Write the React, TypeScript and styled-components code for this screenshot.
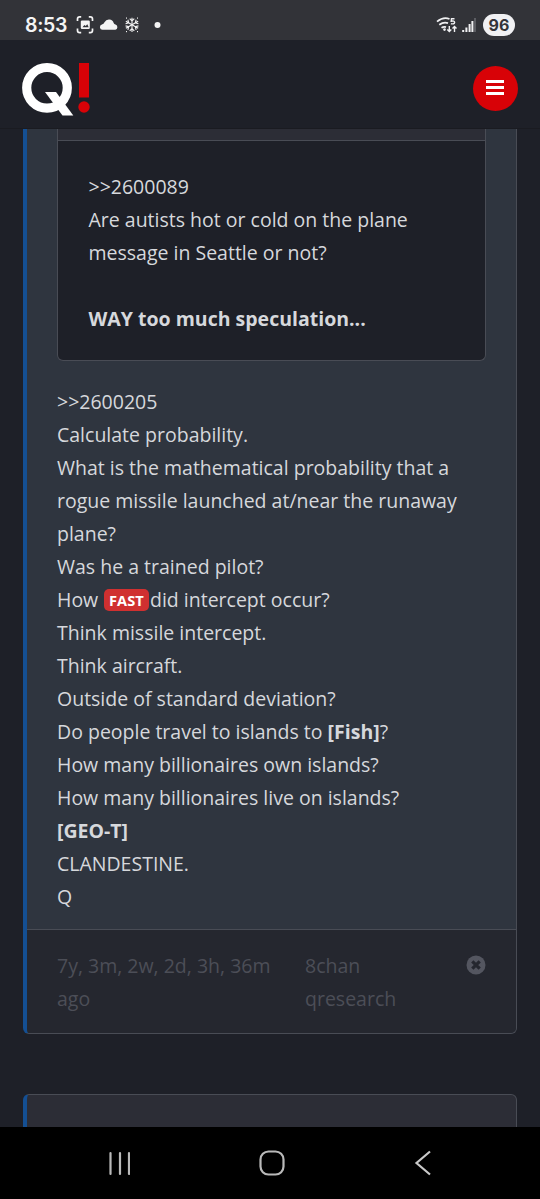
import React from "react";
import styled, { createGlobalStyle } from "styled-components";

const Global = createGlobalStyle`
  * { box-sizing: border-box; }
  body { margin: 0; background: #1e2028; }
`;

const Screen = styled.div`
  width: 540px;
  height: 1199px;
  display: flex;
  flex-direction: column;
  overflow: hidden;
  background: #1e2028;
  color: #d6d8dc;
  font-family: "Open Sans", "Noto Sans", sans-serif;
  font-size: 19.5px;
  line-height: 33px;
`;

const StatusBar = styled.div`
  flex: none;
  height: 40px;
  display: flex;
  justify-content: space-between;
  padding: 0 25px;
  background: #323338;
  color: #f4f4f4;
`;

const StatusGroup = styled.div`
  display: flex;
  align-items: center;
  padding-top: 10px;
`;

const Clock = styled.span`
  width: 51px;
  font: 600 19.5px/30px Inter, Roboto, sans-serif;
  letter-spacing: -0.35px;
  white-space: nowrap;
`;

const Battery = styled.span`
  width: 32px;
  height: 22px;
  margin-left: 6px;
  border-radius: 11px;
  background: #f1f1f3;
  color: #333439;
  text-align: center;
  font: 700 16px/22px Inter, Roboto, sans-serif;
`;

const Header = styled.header`
  flex: none;
  height: 89px;
  display: flex;
  align-items: flex-start;
  justify-content: space-between;
  padding: 22px 22.5px 0 22px;
  border-bottom: 1px solid #1a1b21;
`;

const MenuButton = styled.button`
  width: 45px;
  height: 45px;
  margin-top: 3.5px;
  padding: 0 1px 1px 0;
  border: 0;
  border-radius: 50%;
  background: #d80207;
  display: flex;
  flex-direction: column;
  align-items: center;
  justify-content: center;
  gap: 3px;
`;

const MenuLine = styled.span`
  width: 18px;
  height: 3px;
  background: #fff;
`;

const Content = styled.main`
  flex: 1;
  min-height: 0;
  overflow: hidden;
  padding: 0 23px;
`;

const Card = styled.article<{ $next?: boolean }>`
  border: 1px solid #494c55;
  border-left: 4px solid #144f93;
  border-radius: ${(p) => (p.$next ? "6px 6px 0 0" : "0 0 6px 6px")};
  border-top-width: ${(p) => (p.$next ? "1px" : "0")};
  margin-top: ${(p) => (p.$next ? "60px" : "0")};
  height: ${(p) => (p.$next ? "60px" : "905px")};
  background: ${(p) => (p.$next ? "#2c2d36" : "#2f353f")};
  overflow: hidden;
`;

const CardBody = styled.div`
  height: 800px;
  padding: 0 30px;
`;

const Quote = styled.section`
  height: 232px;
  border: 1px solid #494c55;
  border-top: 0;
  border-radius: 0 0 6px 6px;
  background: #1e2028;
  overflow: hidden;
`;

const QuoteHeader = styled.div`
  height: 12px;
  background: #2c2d36;
  border-bottom: 1px solid #494c55;
`;

const QuoteText = styled.div`
  padding: 29px 30px 0 30.5px;
`;

const Line = styled.div`
  height: 33px;
  white-space: nowrap;
`;

const Message = styled.div`
  padding-top: 24px;
`;

const Tag = styled.span`
  display: inline-block;
  height: 22px;
  margin: -5px 1px 0 0.5px;
  padding: 0 5.3px;
  border-radius: 5px;
  background: #d03030;
  color: #fff;
  font-size: 14.6px;
  font-weight: 700;
  line-height: 22px;
  vertical-align: 1px;
`;

const CardFooter = styled.footer`
  height: 104px;
  display: flex;
  padding: 19px 30px 0;
  border-top: 1px solid #494c55;
  background: #25272f;
  color: #4c4e57;
`;

const Age = styled.div`
  width: 248px;
`;

const Source = styled.div`
  flex: 1;
`;

const CloseIcon = styled.svg`
  flex: none;
  margin-top: 5.5px;
`;

const NavBar = styled.nav`
  flex: none;
  height: 72px;
  display: flex;
  align-items: center;
  justify-content: space-between;
  padding: 0 108px 0 106px;
  background: #000;
`;

const message: React.ReactNode[] = [
  ">>2600205",
  "Calculate probability.",
  "What is the mathematical probability that a",
  "rogue missile launched at/near the runaway",
  "plane?",
  "Was he a trained pilot?",
  <>How <Tag>FAST</Tag>did intercept occur?</>,
  "Think missile intercept.",
  "Think aircraft.",
  "Outside of standard deviation?",
  <>Do people travel to islands to <b>[Fish]</b>?</>,
  "How many billionaires own islands?",
  "How many billionaires live on islands?",
  <b>[GEO-T]</b>,
  "CLANDESTINE.",
  "Q",
];

const StatusIcons = () => (
  <svg width="90" height="24" viewBox="76 13 90 24" fill="none" stroke="#f4f4f4" strokeWidth="1.7">
    <path d="M77.500 21v-2q0-2.200 2.200-2.200h1.500M88.800 16.800h1.500q2.200 0 2.200 2.200v2M92.500 28.500v2q0 2.200-2.200 2.200h-1.500M81.200 32.700h-1.500q-2.200 0-2.200-2.200v-2" />
    <rect x="80.800" y="20.500" width="9" height="8.500" rx="1.200" fill="#f4f4f4" stroke="none" />
    <path d="M82.500 27.300l1.900-2.400 1.300 1 1.600-1.700 1.400 3.100z" fill="#323338" stroke="none" />
    <path d="M102.500 29.800a2.700 2.700 0 0 1-.6-5.300q1.900-.4 2.600-2.300a5 5 0 0 1 9.200.8q.4 1.300 1.800 1.600a2.700 2.700 0 0 1-.2 5.200z" fill="#f4f4f4" stroke="none" />
    <g strokeWidth="1.100">
      {[0, 60, 120, 180, 240, 300].map((a) => (
        <path key={a} transform={`rotate(${a} 132 24.800)`} d="M132 24.800V17.700M129.700 18.700l2.300 2.300 2.300-2.300" />
      ))}
    </g>
    <path d="M126.500 17.500v1.200M137.500 17.500v1.200M126.500 31v1.200M137.500 31v1.200" strokeWidth="1" />
    <circle cx="157.500" cy="25" r="3" fill="#f4f4f4" stroke="none" />
  </svg>
);

const SignalIcons = () => (
  <svg width="42" height="22" viewBox="435 14 42 22" fill="none" stroke="#f0f0f2" strokeWidth="1.800">
    <path d="M437 21.600q6.500-5.200 12.500-2.600M439.300 24.800q4.500-3.400 8.700-1.700M441.500 27.800q2.300-1.500 4.500-.7" />
    <circle cx="444.500" cy="29.600" r="1.300" fill="#f0f0f2" stroke="none" />
    <path d="M454.500 18.700h-3l-.3 2.500q3.300-.8 3.400 1.200-.1 2-3.700 1.300" strokeWidth="1.400" />
    <path d="M449.300 26v5.500M447.300 29.500l2 2.100 2-2.100M454.500 32v-5.500M452.500 28.500l2-2.100 2 2.100" strokeWidth="1.400" />
    <path d="M463.200 32v-2M466.400 32v-4.600M469.600 32v-8M472.400 32V21" strokeWidth="2" />
    <path d="M475 32V18" stroke="#73747a" strokeWidth="1.300" />
  </svg>
);

const Logo = () => (
  <svg width="70" height="56" viewBox="22 62 70 56">
    <circle cx="47" cy="87.800" r="20.300" fill="none" stroke="#fff" strokeWidth="9.200" />
    <path d="M45 92h11l17.300 23.500H62.500z" fill="#fff" />
    <rect x="79" y="63" width="10" height="34.500" fill="#d80207" />
    <circle cx="84" cy="107" r="5.700" fill="#d80207" />
  </svg>
);

export default function App() {
  return (
    <Screen>
      <Global />
      <StatusBar>
        <StatusGroup>
          <Clock>8:53</Clock>
          <StatusIcons />
        </StatusGroup>
        <StatusGroup>
          <SignalIcons />
          <Battery>96</Battery>
        </StatusGroup>
      </StatusBar>
      <Header>
        <Logo />
        <MenuButton aria-label="Menu">
          <MenuLine />
          <MenuLine />
          <MenuLine />
        </MenuButton>
      </Header>
      <Content>
        <Card>
          <CardBody>
            <Quote>
              <QuoteHeader />
              <QuoteText>
                <Line>&gt;&gt;2600089</Line>
                <Line>Are autists hot or cold on the plane</Line>
                <Line>message in Seattle or not?</Line>
                <Line />
                <Line><b>WAY too much speculation...</b></Line>
              </QuoteText>
            </Quote>
            <Message>
              {message.map((text, i) => (
                <Line key={i}>{text}</Line>
              ))}
            </Message>
          </CardBody>
          <CardFooter>
            <Age>7y, 3m, 2w, 2d, 3h, 36m<br />ago</Age>
            <Source>8chan<br />qresearch</Source>
            <CloseIcon width="20" height="20" viewBox="0 0 20 20">
              <circle cx="10" cy="10" r="9.500" fill="#545660" />
              <path d="M6.300 6.300l7.400 7.400M13.700 6.300l-7.400 7.400" stroke="#25272f" strokeWidth="3.200" />
            </CloseIcon>
          </CardFooter>
        </Card>
        <Card $next />
      </Content>
      <NavBar>
        <svg width="24" height="26" viewBox="0 0 24 26" stroke="#b9b9b9" strokeWidth="2.200" strokeLinecap="round">
          <path d="M4.500 3v21M14 3v21M23 3v21" />
        </svg>
        <svg width="26" height="26" viewBox="0 0 26 26" fill="none" stroke="#b9b9b9" strokeWidth="2.200">
          <rect x="1.500" y="1.500" width="23" height="23" rx="8" />
        </svg>
        <svg width="18" height="26" viewBox="0 0 18 26" fill="none" stroke="#c9c9c9" strokeWidth="2.200">
          <path d="M16 1.500L2.500 13 16 24.500" />
        </svg>
      </NavBar>
    </Screen>
  );
}
